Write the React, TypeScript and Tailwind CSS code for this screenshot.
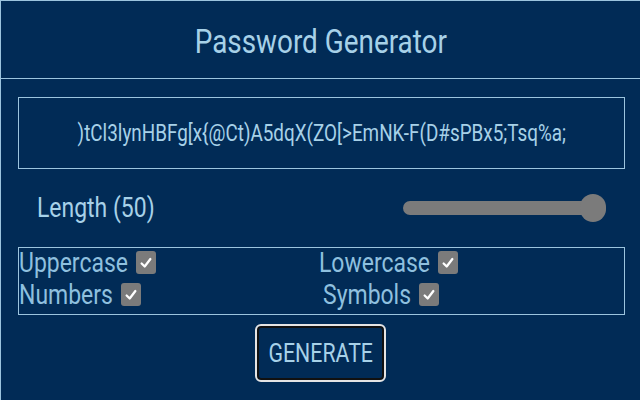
const options = [
  { label: "Uppercase", text: "", gap: "-ml-[22px]" },
  { label: "Lowercase", text: "-ml-[3px]", gap: "-ml-[22px]" },
  { label: "Numbers", text: "", gap: "-ml-[18px]" },
  { label: "Symbols", text: "ml-[1px]", gap: "-ml-[17px]" },
];

function Check() {
  return (
    <span className="inline-flex items-center justify-center w-[20px] h-[23px] rounded-[3px] bg-[#7b7b7b] ml-[6px]">
      <svg viewBox="0 0 16 16" className="w-[14px] h-[14px]" fill="none" stroke="white" strokeWidth="2.6" strokeLinecap="round" strokeLinejoin="round">
        <polyline points="3 8.5 6.5 12 13 3.5" />
      </svg>
    </span>
  );
}

export default function App() {
  return (
    <div
      className="w-[640px] h-[400px] overflow-hidden bg-[#012b56] border-t border-l border-[#9cc4de] text-[#a7d1e8]"
      style={{ fontFamily: "Roboto, 'Liberation Sans', sans-serif" }}
    >
      <header className="h-[78px] flex items-center justify-center border-b border-[#9cc4de]">
        <span className="inline-block text-[34px] leading-none scale-x-[0.82] mt-[2px]">Password Generator</span>
      </header>

      <div className="ml-[17px] mt-[18px] w-[607px] h-[72px] border border-[#9cc4de] flex items-center justify-center">
        <span className="inline-block text-[23px] leading-none scale-x-[0.82] whitespace-nowrap">
          )tCl3lynHBFg[x{"{"}@Ct)A5dqX(ZO[&gt;EmNK-F(D#sPBx5;Tsq%a;
        </span>
      </div>

      <div className="h-[78px] flex items-center justify-between pl-[36px] pr-[34px]">
        <span className="inline-block text-[28px] leading-none scale-x-[0.82] origin-left">Length (50)</span>
        <div className="relative w-[203px] h-[14px] rounded-full bg-[#7b7b7b]">
          <div className="absolute right-0 top-[-7px] w-[26px] h-[28px] rounded-full bg-[#7b7b7b]" />
        </div>
      </div>

      <div className="ml-[17px] w-[607px] h-[68px] border border-[#9cc4de] grid grid-cols-2 content-center pb-[5px] text-[#8fc0df]">
        {options.map((o) => (
          <div key={o.label} className="flex items-center h-[32px]">
            <span className={`inline-block text-[28px] leading-none scale-x-[0.82] origin-left ${o.text}`}>{o.label}</span>
            <span className={o.gap} />
            <Check />
          </div>
        ))}
      </div>

      <div className="flex justify-center mt-[9px]">
        <button className="w-[131px] h-[58px] rounded-[6px] border-2 border-[#e4e4e4] shadow-[inset_0_0_0_2px_#111] bg-[#012b56] flex items-center justify-center text-[#a7d1e8]">
          <span className="inline-block text-[26px] leading-none scale-x-[0.82]">GENERATE</span>
        </button>
      </div>
    </div>
  );
}
